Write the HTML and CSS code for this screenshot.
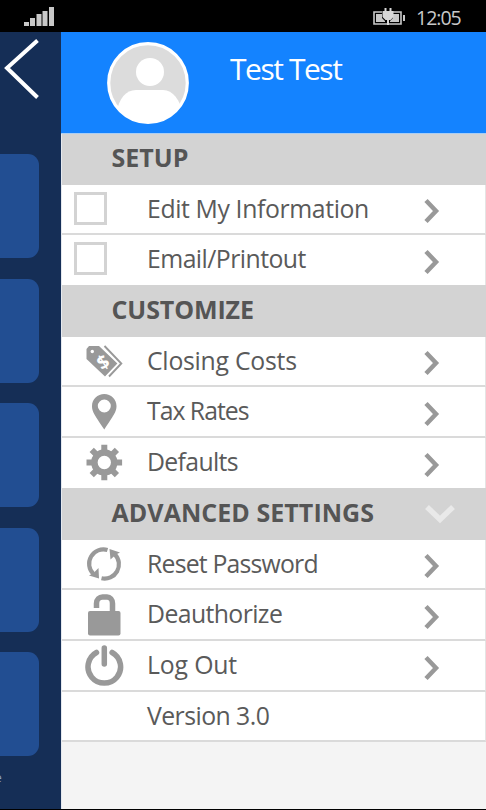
FILE: index.html
```html
<!DOCTYPE html>
<html lang="en">
<head>
<meta charset="utf-8">
<title>Settings</title>
<link rel="stylesheet" href="styles.css">
</head>
<body>
<svg class="defs" aria-hidden="true">
  <symbol id="chevron" viewBox="0 0 18 26"><path d="M3 2.500 13 13 3 23.500" fill="none" stroke="currentColor" stroke-width="4.500"/></symbol>
</svg>
<header class="status">
  <svg class="signal" viewBox="0 0 30 20" fill="#c8c8c8"><path d="M0 15h5v4H0zM6 11h5v8H6zM12.500 7h5v12h-5zM18.500 4h5v15h-5zM25 0h5v19h-5z"/></svg>
  <svg class="battery" viewBox="0 0 34 18"><path d="M10 4H2v12h27V4h-8" fill="none" stroke="#c8c8c8" stroke-width="1.600"/><path d="M4 6h6v4l3 3v1H4zM27 6h-6v4l-3 3v1h9zM31 7h2v6h-2z" fill="#c8c8c8"/><path d="M12.500 0h2v3h3V0h2v3h2v6l-3 3h-1.500v5h-2v-5H13.500l-3-3V3h2z" fill="#d8d8d8"/></svg>
  <span class="clock">12:05</span>
</header>
<div class="screen">
  <aside class="under">
    <svg class="back" viewBox="0 0 42 70"><path d="M37.500 8.500 7 36l30.500 29.500" fill="none" stroke="#fff" stroke-width="4"/></svg>
    <div class="tiles">
      <div class="tile"></div><div class="tile"></div><div class="tile"></div><div class="tile"></div><div class="tile"></div>
    </div>
    <span class="cut">e</span>
  </aside>
  <main class="drawer">
    <section class="profile">
      <svg class="avatar" viewBox="0 0 82 82"><defs><clipPath id="face"><circle cx="41" cy="41" r="39.500"/></clipPath></defs><circle cx="41" cy="41" r="39.300" fill="#dcdcdc"/><g clip-path="url(#face)" fill="#fff"><circle cx="43" cy="30" r="14"/><path d="M9 72C12 56 19 48 29 48h27c10 0 17 10 20 24v12H9z"/></g><circle cx="41" cy="41" r="39.300" fill="none" stroke="#fff" stroke-width="3.200"/></svg>
      <h1 class="name">Test Test</h1>
    </section>
    <h2 class="group first"><span class="t-setup">SETUP</span></h2>
    <div class="row"><span class="icon"><i class="box"></i></span><span class="label t-edit">Edit My Information</span><svg class="chev"><use href="#chevron"/></svg></div>
    <div class="row last"><span class="icon"><i class="box"></i></span><span class="label t-email">Email/Printout</span><svg class="chev"><use href="#chevron"/></svg></div>
    <h2 class="group"><span class="t-custom">CUSTOMIZE</span></h2>
    <div class="row"><span class="icon"><svg viewBox="0 0 44 48"><path d="M9 9h10l18.500 17.500L25 39.500 6.500 22v-10z" fill="#999"/><path d="M21.500 9 38.700 26.500 26 40" fill="none" stroke="#fff" stroke-width="1.600"/><path d="M24.500 9 41.300 26.500 29 39.500" fill="none" stroke="#999" stroke-width="1.900"/><circle cx="12.300" cy="14.500" r="1.700" fill="#fff"/><text class="dollar" x="23" y="32" transform="rotate(-32 23 25)">$</text></svg></span><span class="label t-closing">Closing Costs</span><svg class="chev"><use href="#chevron"/></svg></div>
    <div class="row"><span class="icon"><svg viewBox="0 0 44 48"><path fill-rule="evenodd" d="M24.300 7C17.500 7 12 12 12 19c0 6 3 9.500 12.300 23.500C33.500 28.500 36.500 25 36.500 19c0-7-5.500-12-12.200-12zm0 5.500a6.500 6.500 0 1 1 0 13 6.500 6.500 0 0 1 0-13z" fill="#999"/></svg></span><span class="label t-tax">Tax Rates</span><svg class="chev"><use href="#chevron"/></svg></div>
    <div class="row last"><span class="icon"><svg viewBox="0 0 44 48"><circle cx="24.300" cy="24.500" r="9.900" fill="none" stroke="#999" stroke-width="6.500"/><g stroke="#999" stroke-width="6"><path d="M24.300 6.700v7M24.300 35.300v7M6.500 24.500h7M35.100 24.500h7M11.700 11.900l5 5M31.900 32.100l5 5M11.700 37.100l5-5M31.900 16.900l5-5"/></g></svg></span><span class="label t-default">Defaults</span><svg class="chev"><use href="#chevron"/></svg></div>
    <h2 class="group"><span class="t-adv">ADVANCED SETTINGS</span><svg class="expand" viewBox="0 0 30 20"><path d="M2 3 15 15.500 28 3" fill="none" stroke="#e9e9e9" stroke-width="5.500"/></svg></h2>
    <div class="row"><span class="icon"><svg viewBox="0 0 44 48"><path d="M27.500 10A14.300 14.300 0 0 0 13.500 34M21.500 38.300A14.300 14.300 0 0 0 35 14.500" fill="none" stroke="#999" stroke-width="4.200"/><path d="M29.500 9 40 12.500l-4 2-5.500 5zM9 35.500l10 3-.5-10.500-5 5z" fill="#999"/></svg></span><span class="label t-reset">Reset Password</span><svg class="chev"><use href="#chevron"/></svg></div>
    <div class="row"><span class="icon"><svg viewBox="0 0 44 48"><rect x="8" y="21" width="32.500" height="24.500" rx="2" fill="#999"/><path d="M16.500 18v-4.500c0-4 3-6.500 6-6.500H27c3 0 5.500 2.500 5.500 6.500V22" fill="none" stroke="#999" stroke-width="5.500"/></svg></span><span class="label t-deauth">Deauthorize</span><svg class="chev"><use href="#chevron"/></svg></div>
    <div class="row"><span class="icon"><svg viewBox="0 0 44 48"><path d="M16.500 11.500a16.300 16.300 0 1 0 15.600 0M24.300 7V23" fill="none" stroke="#999" stroke-width="5.500" stroke-linecap="round"/></svg></span><span class="label t-log">Log Out</span><svg class="chev"><use href="#chevron"/></svg></div>
    <div class="row"><span class="icon"></span><span class="label t-version">Version 3.0</span></div>
  </main>
</div>
</body>
</html>
```

FILE: styles.css
```css
* { box-sizing: border-box; }
body { margin: 0; width: 486px; height: 810px; overflow: hidden; background: #000; font-family: "Open Sans", sans-serif; color: #5a5a5a; }
.defs { display: none; }
.status { height: 32px; padding: 0 25px 0 24px; display: flex; align-items: flex-start; color: #c8c8c8; }
.signal { width: 30px; height: 20px; margin-top: 7px; }
.battery { width: 34px; height: 18px; margin: 8px 10px 0 auto; }
.clock { width: 45px; font-size: 19.500px; line-height: 35px; letter-spacing: -1px; white-space: nowrap; }
.screen { display: flex; height: 776.500px; }
.under { width: 61px; background: #152e56; overflow: hidden; }
.back { display: block; width: 42px; height: 70px; }
.tiles { display: grid; gap: 20.500px; padding-top: 52px; }
.tile { width: 38.500px; height: 104px; border-radius: 0 11px 11px 0; background: #224e92; }
.cut { display: block; margin: 12px 0 0 -5px; font-size: 12px; line-height: 20px; color: #8ba0c4; }
.drawer { width: 425px; background: #f4f4f4; border-left: 1px solid #e4e8ee; }
.profile { height: 101.500px; background: #1483ff; display: flex; margin-left: -1px; border-bottom: 1px solid #a9cef5; }
.avatar { width: 82px; height: 82px; margin: 10px 0 0 46px; }
.name { margin: 15px 0 0 41px; font-size: 30px; line-height: 44px; font-weight: 400; letter-spacing: -1.450px; color: #fff; white-space: nowrap; }
.group { margin: 0; height: 52px; padding: 0 31px 0 49.500px; display: flex; justify-content: space-between; background: #d3d3d3; color: #555; font-size: 25px; font-weight: 700; line-height: 48px; white-space: nowrap; }
.first { height: 51px; line-height: 46px; }
.expand { width: 30px; height: 20px; margin-top: 16px; }
.row { height: 50.600px; background: #fff; border-bottom: 2px solid #dadada; border-right: 1px solid #e4e4e4; display: flex; }
.last { height: 49.800px; border-bottom: 0; }
.icon { width: 85px; height: 48px; padding-left: 18px; flex: none; }
.icon svg { display: block; width: 44px; height: 48px; }
.box { display: block; width: 33px; height: 33px; margin: 7px 0 0 -6px; border: 3px solid #d3d3d3; }
.label { width: 276px; font-size: 24.800px; line-height: 46px; white-space: nowrap; }
.chev { width: 18px; height: 26px; margin-top: 13.500px; color: #999; }
.dollar { font: 700 19px "Open Sans", sans-serif; fill: #fff; text-anchor: middle; }
.t-edit { letter-spacing: -.38px; }
.t-email { letter-spacing: -.55px; }
.t-custom { letter-spacing: -.1px; }
.t-closing { letter-spacing: -.25px; }
.t-tax { letter-spacing: -1px; }
.t-default { letter-spacing: -.65px; }
.t-adv { letter-spacing: .05px; }
.t-reset { letter-spacing: -.8px; }
.t-deauth { letter-spacing: -.6px; }
.t-log { letter-spacing: -.15px; }
.t-version { letter-spacing: -.55px; }
```
